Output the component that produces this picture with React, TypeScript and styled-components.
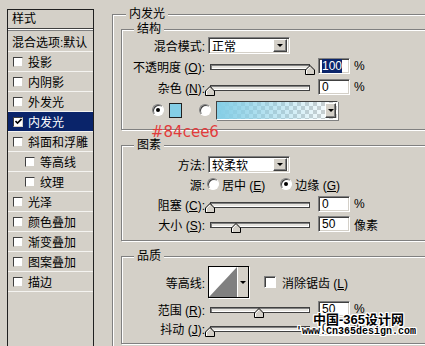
import React from "react";
import styled, { createGlobalStyle } from "styled-components";

const FACE = `"Liberation Sans", "Noto Sans CJK SC", sans-serif`;
const BG = "#d4d0c8";
const NAVY = "#0a246a";

const Global = createGlobalStyle`
  html, body { margin: 0; padding: 0; background: ${BG}; }
  body { font-family: ${FACE}; font-size: 12px; color: #000; }
`;

const Root = styled.div`
  position: relative;
  width: 425px;
  height: 346px;
  overflow: hidden;
  box-sizing: border-box;
  padding: 9px 0 0 7px;
  display: flex;
  align-items: flex-start;
  background: ${BG};
`;

/* ---------- left style list ---------- */
const StylesPanel = styled.div`
  flex: none;
  width: 87px;
  height: 360px;
  box-sizing: border-box;
  border: 1px solid #202020;
  display: flex;
  flex-direction: column;
`;

const PanelHeader = styled.div`
  height: 18px;
  line-height: 18px;
  padding-left: 4px;
  border-bottom: 1px solid #404040;
  box-shadow: 0 1px 0 #ffffff, 0 2px 0 #808080;
  margin-bottom: 2px;
`;

const LayerRow = styled.div<{ $indent?: boolean; $selected?: boolean; $plain?: boolean }>`
  height: ${(p) => (p.$plain ? 20 : 19)}px;
  flex: none;
  display: flex;
  align-items: center;
  gap: 5px;
  padding-left: ${(p) => (p.$plain ? 4 : p.$indent ? 17 : 5)}px;
  border-bottom: 1px solid #f4f3f0;
  background: ${(p) => (p.$selected ? NAVY : "transparent")};
  color: ${(p) => (p.$selected ? "#fff" : "#000")};
  white-space: nowrap;
`;

const Check = styled.span`
  flex: none;
  width: 10px;
  height: 10px;
  box-sizing: border-box;
  background: #fff;
  border: 1px solid;
  border-color: #404040 #d4d0c8 #d4d0c8 #404040;
  display: flex;
  align-items: center;
  justify-content: center;
`;

const CheckMark = () => (
  <svg width="7" height="7" viewBox="0 0 7 7">
    <path d="M0.5 3 L2.5 5 L6.5 1" fill="none" stroke="#000" strokeWidth="1.6" />
  </svg>
);

/* ---------- right side ---------- */
const Main = styled.div`
  margin: 5px 0 0 18px;
  flex: none;
`;

const OuterGroup = styled.div`
  position: relative;
  width: 340px;
  height: 360px;
  box-sizing: border-box;
  border: 1px solid #808080;
  box-shadow: inset 1px 1px 0 #fff;
  padding: 14px 0 0 8px;
  display: flex;
  flex-direction: column;
  gap: 15px;
`;

const Group = styled.div<{ $pt: number; $pb: number }>`
  position: relative;
  width: 320px;
  box-sizing: border-box;
  border: 1px solid #808080;
  box-shadow: inset 1px 1px 0 #fff, 1px 1px 0 #fff;
  padding: ${(p) => p.$pt}px 0 ${(p) => p.$pb}px 0;
  display: flex;
  flex-direction: column;
`;

const Legend = styled.span<{ $left: number }>`
  position: absolute;
  top: -8px;
  left: ${(p) => p.$left}px;
  line-height: 14px;
  padding: 0 3px;
  background: ${BG};
`;

const Row = styled.div<{ $h: number; $pl?: number }>`
  height: ${(p) => p.$h}px;
  display: flex;
  align-items: center;
  padding-left: ${(p) => p.$pl ?? 0}px;
  white-space: nowrap;
`;

const Label = styled.span`
  flex: none;
  width: 83px;
  text-align: right;
`;

const U = styled.span`
  text-decoration: underline;
`;

const Sunken = styled.div`
  box-sizing: border-box;
  background: #fff;
  border: 1px solid;
  border-color: #808080 #fff #fff #808080;
  box-shadow: inset 1px 1px 0 #404040, inset -1px -1px 0 #d4d0c8;
`;

const Select = styled(Sunken)`
  margin-left: 3px;
  width: 82px;
  height: 17px;
  display: flex;
  align-items: center;
  justify-content: space-between;
  padding: 2px 2px 2px 3px;
`;

const DropButton = styled.span<{ $w?: number; $h?: number }>`
  flex: none;
  width: ${(p) => p.$w ?? 14}px;
  height: ${(p) => p.$h ?? 13}px;
  box-sizing: border-box;
  background: ${BG};
  border: 1px solid;
  border-color: #fff #404040 #404040 #fff;
  box-shadow: inset -1px -1px 0 #808080;
  display: flex;
  align-items: center;
  justify-content: center;
`;

const Arrow = styled.span`
  width: 0;
  height: 0;
  border-left: 3px solid transparent;
  border-right: 3px solid transparent;
  border-top: 3px solid #000;
`;

const SliderBox = styled.div`
  position: relative;
  flex: none;
  width: 100px;
  height: 6px;
  margin: 2px 0 0 5px;
`;

const Track = styled.div`
  width: 100%;
  height: 6px;
  box-sizing: border-box;
  border: 1px solid #404040;
  box-shadow: inset 1px 1px 0 #808080, inset -1px -1px 0 #fff;
  background: #e6e4df;
`;

const Thumb = styled.svg<{ $pos: number }>`
  position: absolute;
  top: 1px;
  left: ${(p) => p.$pos * 100}%;
  transform: translateX(-50%);
`;

const NumBox = styled(Sunken)`
  flex: none;
  margin-left: 8px;
  width: 32px;
  height: 16px;
  padding: 1px 0 0 3px;
  line-height: 13px;
  font-size: 12px;
`;

const Hilite = styled.span`
  background: ${NAVY};
  color: #fff;
`;

const Unit = styled.span`
  margin-left: 4px;
`;

const Radio = styled.span<{ $on?: boolean; $ml?: number }>`
  flex: none;
  width: 12px;
  height: 12px;
  box-sizing: border-box;
  margin-left: ${(p) => p.$ml ?? 0}px;
  border-radius: 50%;
  background: #fff;
  border: 1px solid;
  border-color: #808080 #fff #fff #808080;
  box-shadow: inset 1px 1px 0 #404040;
  display: flex;
  align-items: center;
  justify-content: center;
  &::after {
    content: "";
    width: 4px;
    height: 4px;
    border-radius: 50%;
    background: ${(p) => (p.$on ? "#000" : "transparent")};
  }
`;

const RadioText = styled.span`
  margin-left: 3px;
`;

const Swatch = styled.span`
  flex: none;
  margin-left: 5px;
  width: 13px;
  height: 15px;
  box-sizing: border-box;
  border: 1px solid #202020;
  background: #84cee6;
`;

const GradientBox = styled.div`
  flex: none;
  margin-left: 5px;
  width: 122px;
  height: 19px;
  box-sizing: border-box;
  border: 1px solid;
  border-color: #404040 #fff #fff #404040;
  box-shadow: 1px 1px 0 #808080;
  padding: 1px;
  display: flex;
  justify-content: flex-end;
  background:
    linear-gradient(to right, #84cee6, rgba(132, 206, 230, 0)),
    repeating-conic-gradient(#ffffff 0 25%, #cfcfcf 0 50%) 0 0 / 8px 8px;
`;

const ContourBox = styled.div`
  flex: none;
  margin-left: 3px;
  width: 41px;
  height: 32px;
  box-sizing: border-box;
  border: 1px solid #000;
  box-shadow: 1px 1px 0 #fff;
  display: flex;
`;

const ContourStrip = styled.div`
  flex: 1;
  background: ${BG};
  border-left: 1px solid #fff;
  display: flex;
  align-items: center;
  justify-content: center;
`;

const AntiAlias = styled.span`
  margin-left: 15px;
  display: flex;
  align-items: center;
  gap: 6px;
`;

const BoxCheck = styled.span`
  flex: none;
  width: 12px;
  height: 12px;
  box-sizing: border-box;
  background: #fff;
  border: 1px solid;
  border-color: #808080 #fff #fff #808080;
  box-shadow: inset 1px 1px 0 #404040;
`;

/* ---------- overlays ---------- */
const Annotation = styled.div`
  position: absolute;
  left: 151px;
  top: 124px;
  font-family: "DejaVu Sans", sans-serif;
  font-size: 15px;
  color: #e23b3b;
  line-height: 16px;
`;

const Watermark = styled.div<{ $left: number; $top: number; $mono?: boolean }>`
  position: absolute;
  left: ${(p) => p.$left}px;
  top: ${(p) => p.$top}px;
  font-family: ${(p) => (p.$mono ? `"Liberation Mono", monospace` : FACE)};
  font-size: ${(p) => (p.$mono ? 10 : 13)}px;
  font-weight: bold;
  color: #000;
  white-space: nowrap;
  text-shadow: 1px 0 0 #fff, -1px 0 0 #fff, 0 1px 0 #fff, 0 -1px 0 #fff,
    1px 1px 0 #fff, -1px -1px 0 #fff, 1px -1px 0 #fff, -1px 1px 0 #fff;
`;

/* ---------- pieces ---------- */
const Slider = ({ pos }: { pos: number }) => (
  <SliderBox>
    <Track />
    <Thumb $pos={pos} width="10" height="10" viewBox="0 0 10 10">
      <path d="M5 0.5 L9.5 5 V9.5 H0.5 V5 Z" fill="#d4d0c8" stroke="#000" />
      <path d="M1.5 9 V5.4 L5 1.9" fill="none" stroke="#fff" />
    </Thumb>
  </SliderBox>
);

const layers: { name: string; indent?: boolean; checked?: boolean; selected?: boolean }[] = [
  { name: "投影" },
  { name: "内阴影" },
  { name: "外发光" },
  { name: "内发光", checked: true, selected: true },
  { name: "斜面和浮雕" },
  { name: "等高线", indent: true },
  { name: "纹理", indent: true },
  { name: "光泽" },
  { name: "颜色叠加" },
  { name: "渐变叠加" },
  { name: "图案叠加" },
  { name: "描边" },
];

export default function App() {
  return (
    <>
      <Global />
      <Root>
        <StylesPanel>
          <PanelHeader>样式</PanelHeader>
          <LayerRow $plain>混合选项:默认</LayerRow>
          {layers.map((l) => (
            <LayerRow key={l.name} $indent={l.indent} $selected={l.selected}>
              <Check>{l.checked && <CheckMark />}</Check>
              {l.name}
            </LayerRow>
          ))}
        </StylesPanel>

        <Main>
          <OuterGroup>
            <Legend $left={13}>内发光</Legend>

            <Group $pt={5} $pb={6}>
              <Legend $left={12}>结构</Legend>
              <Row $h={20}>
                <Label>混合模式:</Label>
                <Select>
                  正常
                  <DropButton>
                    <Arrow />
                  </DropButton>
                </Select>
              </Row>
              <Row $h={22}>
                <Label>
                  不透明度 (<U>O</U>):
                </Label>
                <Slider pos={1} />
                <NumBox>
                  <Hilite>100</Hilite>
                </NumBox>
                <Unit>%</Unit>
              </Row>
              <Row $h={20}>
                <Label>
                  杂色 (<U>N</U>):
                </Label>
                <Slider pos={0} />
                <NumBox>0</NumBox>
                <Unit>%</Unit>
              </Row>
              <Row $h={26} $pl={30}>
                <Radio $on />
                <Swatch />
                <Radio $ml={17} />
                <GradientBox>
                  <DropButton $w={11} $h={15}>
                    <Arrow />
                  </DropButton>
                </GradientBox>
              </Row>
            </Group>

            <Group $pt={8} $pb={6}>
              <Legend $left={12}>图素</Legend>
              <Row $h={20}>
                <Label>方法:</Label>
                <Select>
                  较柔软
                  <DropButton>
                    <Arrow />
                  </DropButton>
                </Select>
              </Row>
              <Row $h={20}>
                <Label>源:</Label>
                <Radio $ml={2} />
                <RadioText>
                  居中 (<U>E</U>)
                </RadioText>
                <Radio $on $ml={15} />
                <RadioText>
                  边缘 (<U>G</U>)
                </RadioText>
              </Row>
              <Row $h={20}>
                <Label>
                  阻塞 (<U>C</U>):
                </Label>
                <Slider pos={0} />
                <NumBox>0</NumBox>
                <Unit>%</Unit>
              </Row>
              <Row $h={20}>
                <Label>
                  大小 (<U>S</U>):
                </Label>
                <Slider pos={0.26} />
                <NumBox>50</NumBox>
                <Unit>像素</Unit>
              </Row>
            </Group>

            <Group $pt={7} $pb={5}>
              <Legend $left={12}>品质</Legend>
              <Row $h={36}>
                <Label>等高线:</Label>
                <ContourBox>
                  <svg width="28" height="30" viewBox="0 0 28 30">
                    <rect width="28" height="30" fill="#fff" />
                    <path d="M0 30 L28 0 V30 Z" fill="#808080" />
                  </svg>
                  <ContourStrip>
                    <Arrow />
                  </ContourStrip>
                </ContourBox>
                <AntiAlias>
                  <BoxCheck />
                  <span>
                    消除锯齿 (<U>L</U>)
                  </span>
                </AntiAlias>
              </Row>
              <Row $h={18}>
                <Label>
                  范围 (<U>R</U>):
                </Label>
                <Slider pos={0.49} />
                <NumBox>50</NumBox>
                <Unit>%</Unit>
              </Row>
              <Row $h={20}>
                <Label>
                  抖动 (<U>J</U>):
                </Label>
                <Slider pos={0} />
                <NumBox>0</NumBox>
                <Unit>%</Unit>
              </Row>
            </Group>
          </OuterGroup>
        </Main>

        <Annotation>#84cee6</Annotation>
        <Watermark $left={313} $top={309}>
          中国-365设计网
        </Watermark>
        <Watermark $left={296} $top={326} $mono>
          'www.Cn365design.com
        </Watermark>
      </Root>
    </>
  );
}
